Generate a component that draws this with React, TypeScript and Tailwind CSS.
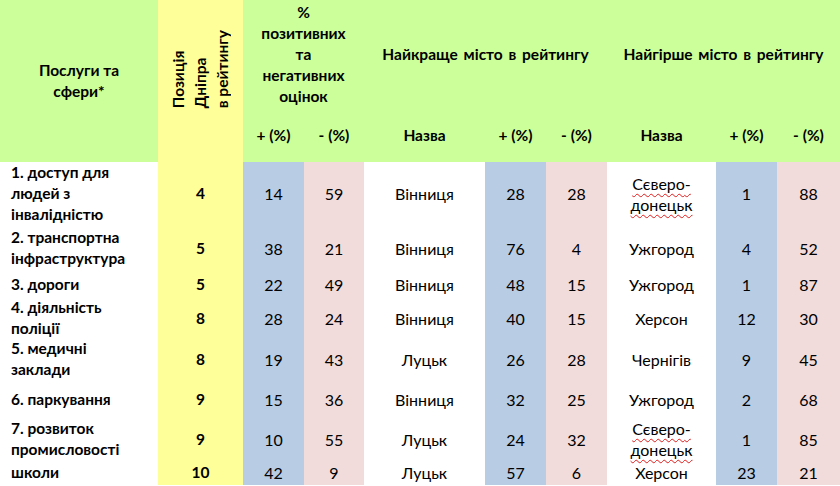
import React from 'react';

// Рейтинг Дніпра за послугами — таблиця у стилі Excel

type Row = {
  label: string[];
  pos: number;
  plus: number;
  minus: number;
  best: string;
  bestPlus: number;
  bestMinus: number;
  worst: string;
  worstPlus: number;
  worstMinus: number;
};

const ROWS: Row[] = [
  { label: ['1. доступ для', 'людей з', 'інвалідністю'], pos: 4, plus: 14, minus: 59, best: 'Вінниця', bestPlus: 28, bestMinus: 28, worst: 'Сєверо-донецьк', worstPlus: 1, worstMinus: 88 },
  { label: ['2. транспортна', 'інфраструктура'], pos: 5, plus: 38, minus: 21, best: 'Вінниця', bestPlus: 76, bestMinus: 4, worst: 'Ужгород', worstPlus: 4, worstMinus: 52 },
  { label: ['3. дороги'], pos: 5, plus: 22, minus: 49, best: 'Вінниця', bestPlus: 48, bestMinus: 15, worst: 'Ужгород', worstPlus: 1, worstMinus: 87 },
  { label: ['4. діяльність', 'поліції'], pos: 8, plus: 28, minus: 24, best: 'Вінниця', bestPlus: 40, bestMinus: 15, worst: 'Херсон', worstPlus: 12, worstMinus: 30 },
  { label: ['5. медичні', 'заклади'], pos: 8, plus: 19, minus: 43, best: 'Луцьк', bestPlus: 26, bestMinus: 28, worst: 'Чернігів', worstPlus: 9, worstMinus: 45 },
  { label: ['6. паркування'], pos: 9, plus: 15, minus: 36, best: 'Вінниця', bestPlus: 32, bestMinus: 25, worst: 'Ужгород', worstPlus: 2, worstMinus: 68 },
  { label: ['7. розвиток', 'промисловості'], pos: 9, plus: 10, minus: 55, best: 'Луцьк', bestPlus: 24, bestMinus: 32, worst: 'Сєверо-донецьк', worstPlus: 1, worstMinus: 85 },
  { label: ['школи'], pos: 10, plus: 42, minus: 9, best: 'Луцьк', bestPlus: 57, bestMinus: 6, worst: 'Херсон', worstPlus: 23, worstMinus: 21 },
];

const GREEN = 'bg-[#ccff99]';
const YELLOW = 'bg-[#ffff99]';
const BLUE = 'bg-[#b8cce4]';
const PINK = 'bg-[#f2dcdb]';

function City({ name }: { name: string }) {
  // "Сєверо-донецьк" у таблиці розбитий на два рядки, з підкресленням правопису
  if (name.includes('-')) {
    const [a, b] = name.split('-');
    return (
      <div className="flex flex-col items-center">
        <span className="underline decoration-wavy decoration-[#e01b1b] decoration-1 underline-offset-[3px]">{a}-</span>
        <span className="underline decoration-wavy decoration-[#e01b1b] decoration-1 underline-offset-[3px]">{b}</span>
      </div>
    );
  }
  return <span>{name}</span>;
}

const cell = 'flex items-center justify-center text-center';
const bold = 'font-bold text-[15.5px]';

export default function App() {
  return (
    <div
      className="w-[840px] h-[486px] bg-white text-black overflow-hidden text-[16px] leading-[21px]"
      style={{ fontFamily: 'Lato, "Liberation Sans", sans-serif' }}
    >
      <div className="grid grid-cols-[158px_85px_61px_60px_121px_61px_61px_109px_61px_1fr] grid-rows-[108px_54px_63px_46px_26px_42px_40px_40px_40px_26px]">
        {/* header */}
        <div className={`${GREEN} ${cell} row-span-2 ${bold}`}>
          <div>Послуги та<br />сфери*</div>
        </div>
        <div className={`${YELLOW} row-span-2 flex justify-center items-end pb-[54px] ${bold}`}>
          <div className="[writing-mode:vertical-rl] rotate-180 leading-[22px] pl-[2px]">
            Позиція<br />Дніпра<br />в рейтингу
          </div>
        </div>
        <div className={`${GREEN} ${cell} col-span-2 ${bold}`}>
          <div>%<br />позитивних<br />та<br />негативних<br />оцінок</div>
        </div>
        <div className={`${GREEN} ${cell} col-span-3 ${bold} [word-spacing:2px]`}>Найкраще місто в рейтингу</div>
        <div className={`${GREEN} ${cell} col-span-3 ${bold} [word-spacing:2px]`}>Найгірше місто в рейтингу</div>

        {['+ (%)', '- (%)', 'Назва', '+ (%)', '- (%)', 'Назва', '+ (%)', '- (%)'].map((t, i) => (
          <div key={i} className={`${GREEN} ${cell} ${bold}`}>{t}</div>
        ))}

        {/* rows */}
        {ROWS.map((r, i) => (
          <React.Fragment key={i}>
            <div className={`flex items-center pl-[11px] ${bold}`}>
              <div>
                {r.label.map((l, j) => (
                  <div key={j}>{l}</div>
                ))}
              </div>
            </div>
            <div className={`${YELLOW} ${cell} ${bold}`}>{r.pos}</div>
            <div className={`${BLUE} ${cell}`}>{r.plus}</div>
            <div className={`${PINK} ${cell}`}>{r.minus}</div>
            <div className={cell}><City name={r.best} /></div>
            <div className={`${BLUE} ${cell}`}>{r.bestPlus}</div>
            <div className={`${PINK} ${cell}`}>{r.bestMinus}</div>
            <div className={cell}><City name={r.worst} /></div>
            <div className={`${BLUE} ${cell}`}>{r.worstPlus}</div>
            <div className={`${PINK} ${cell}`}>{r.worstMinus}</div>
          </React.Fragment>
        ))}
      </div>
    </div>
  );
}
